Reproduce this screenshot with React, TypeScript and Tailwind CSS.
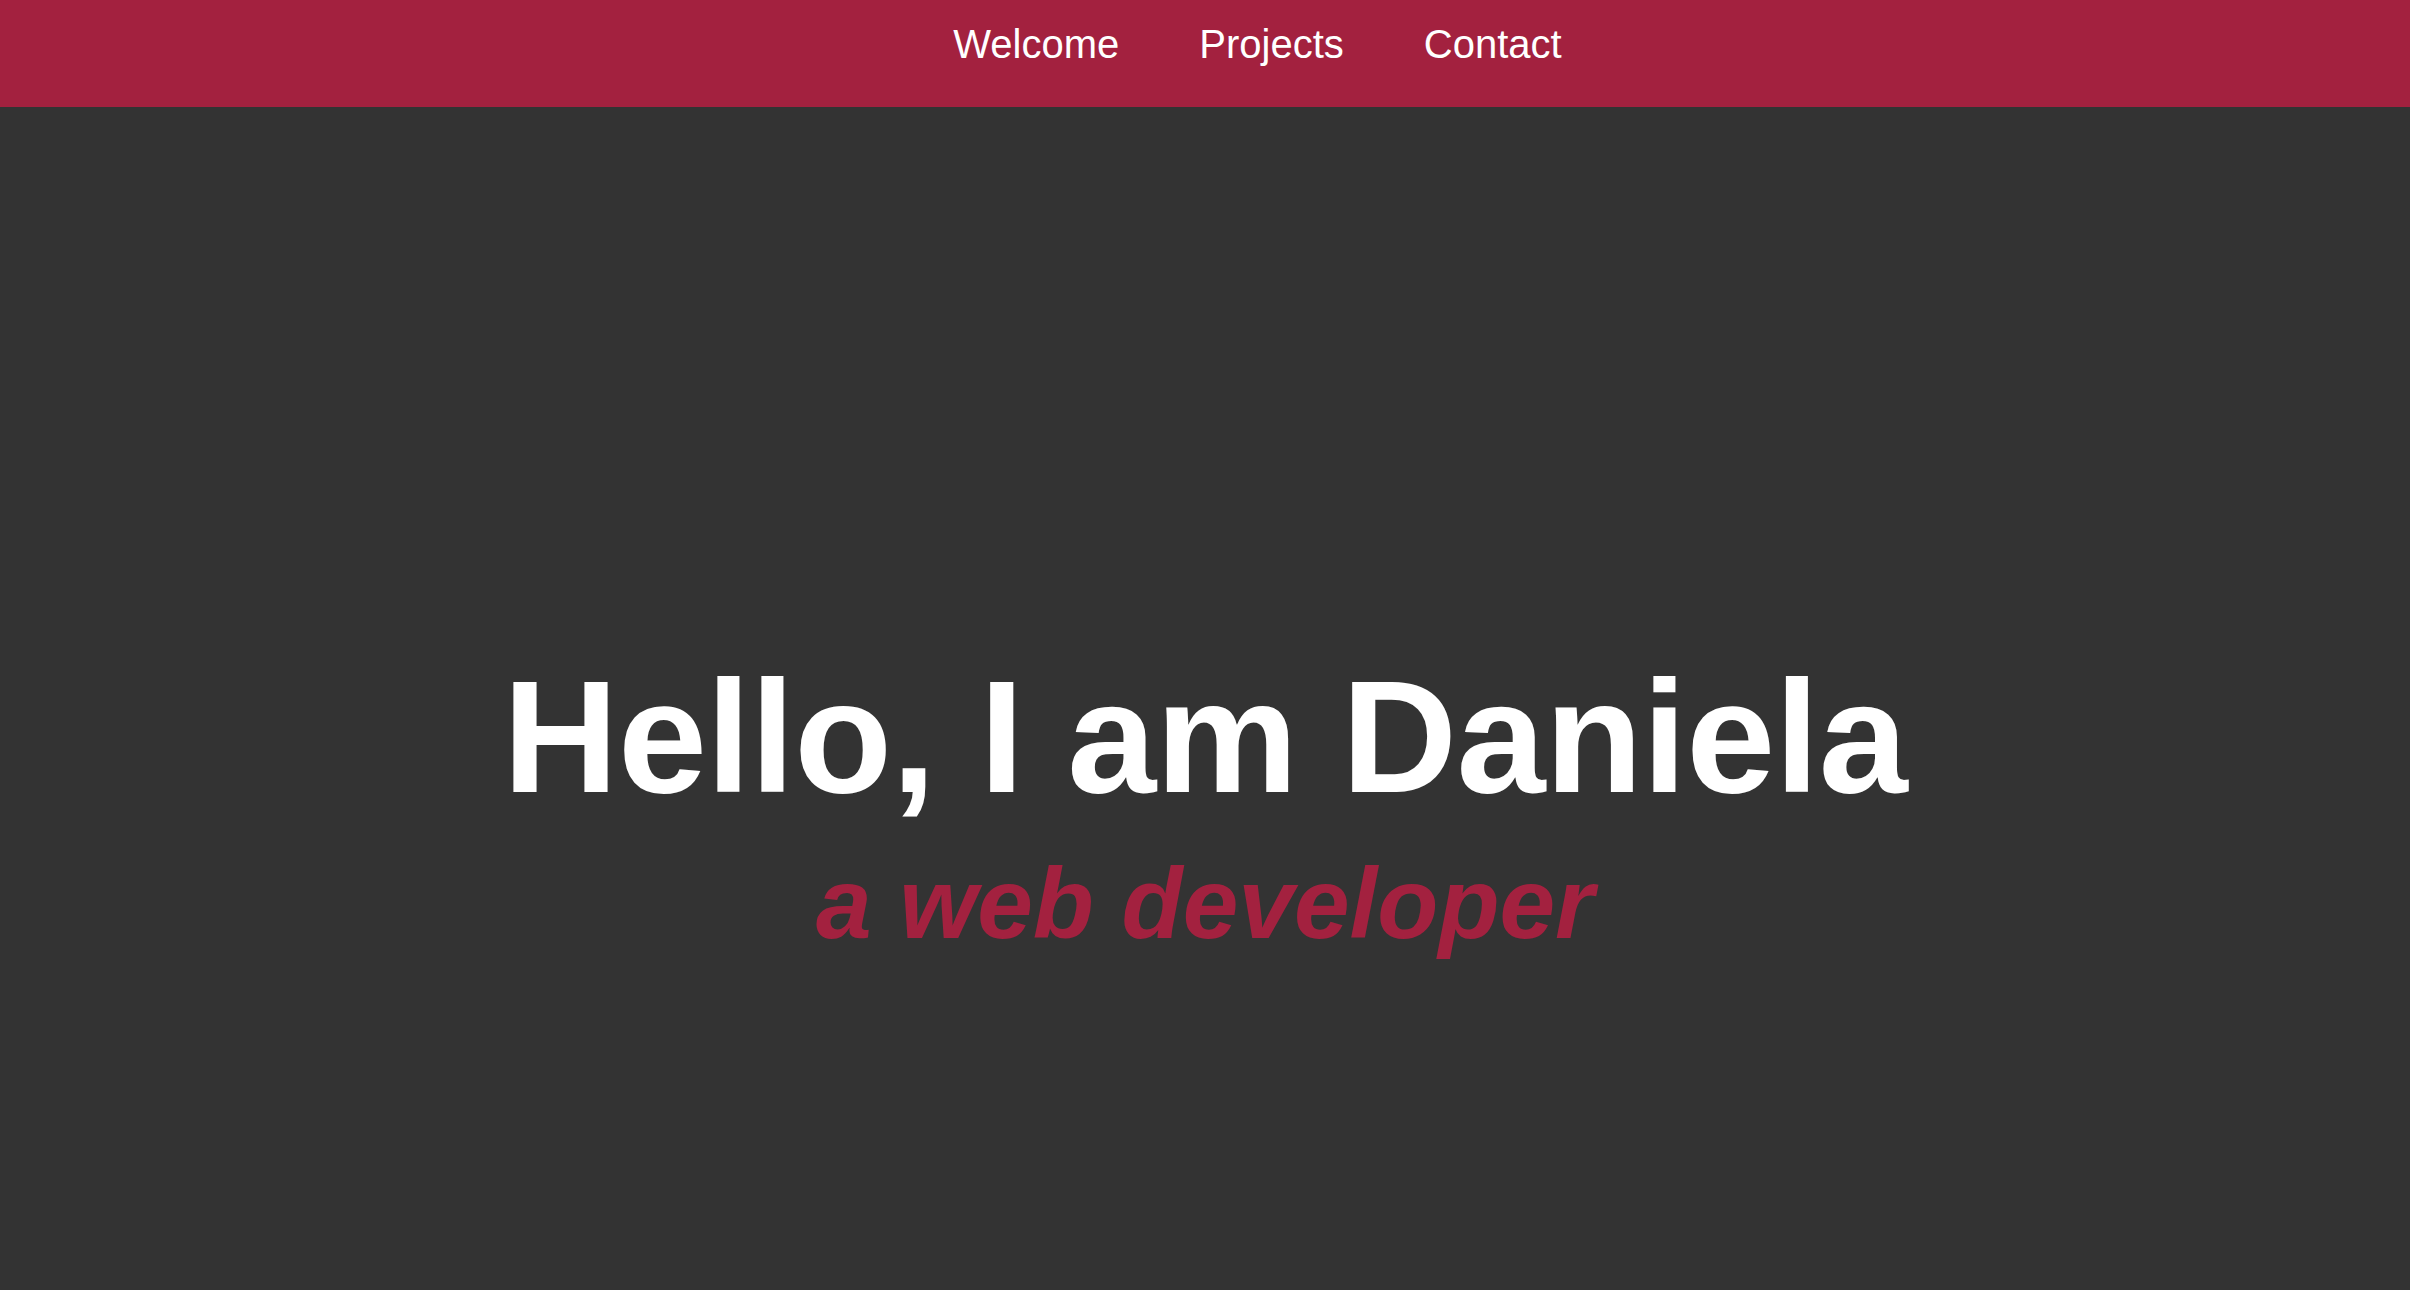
import React from "react";

const navItems = ["Welcome", "Projects", "Contact"];

const App = () => {
  return (
    <div className="min-h-screen bg-[#333333] text-white font-['Liberation_Sans',Arial,sans-serif]">
      <header className="h-[107px] bg-[#a3213f] pt-[21px]">
        <nav className="flex justify-center gap-[80px] pl-[105px]">
          {navItems.map((item) => (
            <a key={item} href="#" className="text-[40px] leading-[46px] text-white">
              {item}
            </a>
          ))}
        </nav>
      </header>

      <main className="pt-[538px] text-center">
        <h1 className="text-[160px] leading-[184px] font-bold tracking-[-0.5px]">Hello, I am Daniela</h1>
        <p className="mt-[17px] text-[100px] leading-[115px] font-bold italic text-[#a3213f]">
          a web developer
        </p>
      </main>
    </div>
  );
};

export default App;
